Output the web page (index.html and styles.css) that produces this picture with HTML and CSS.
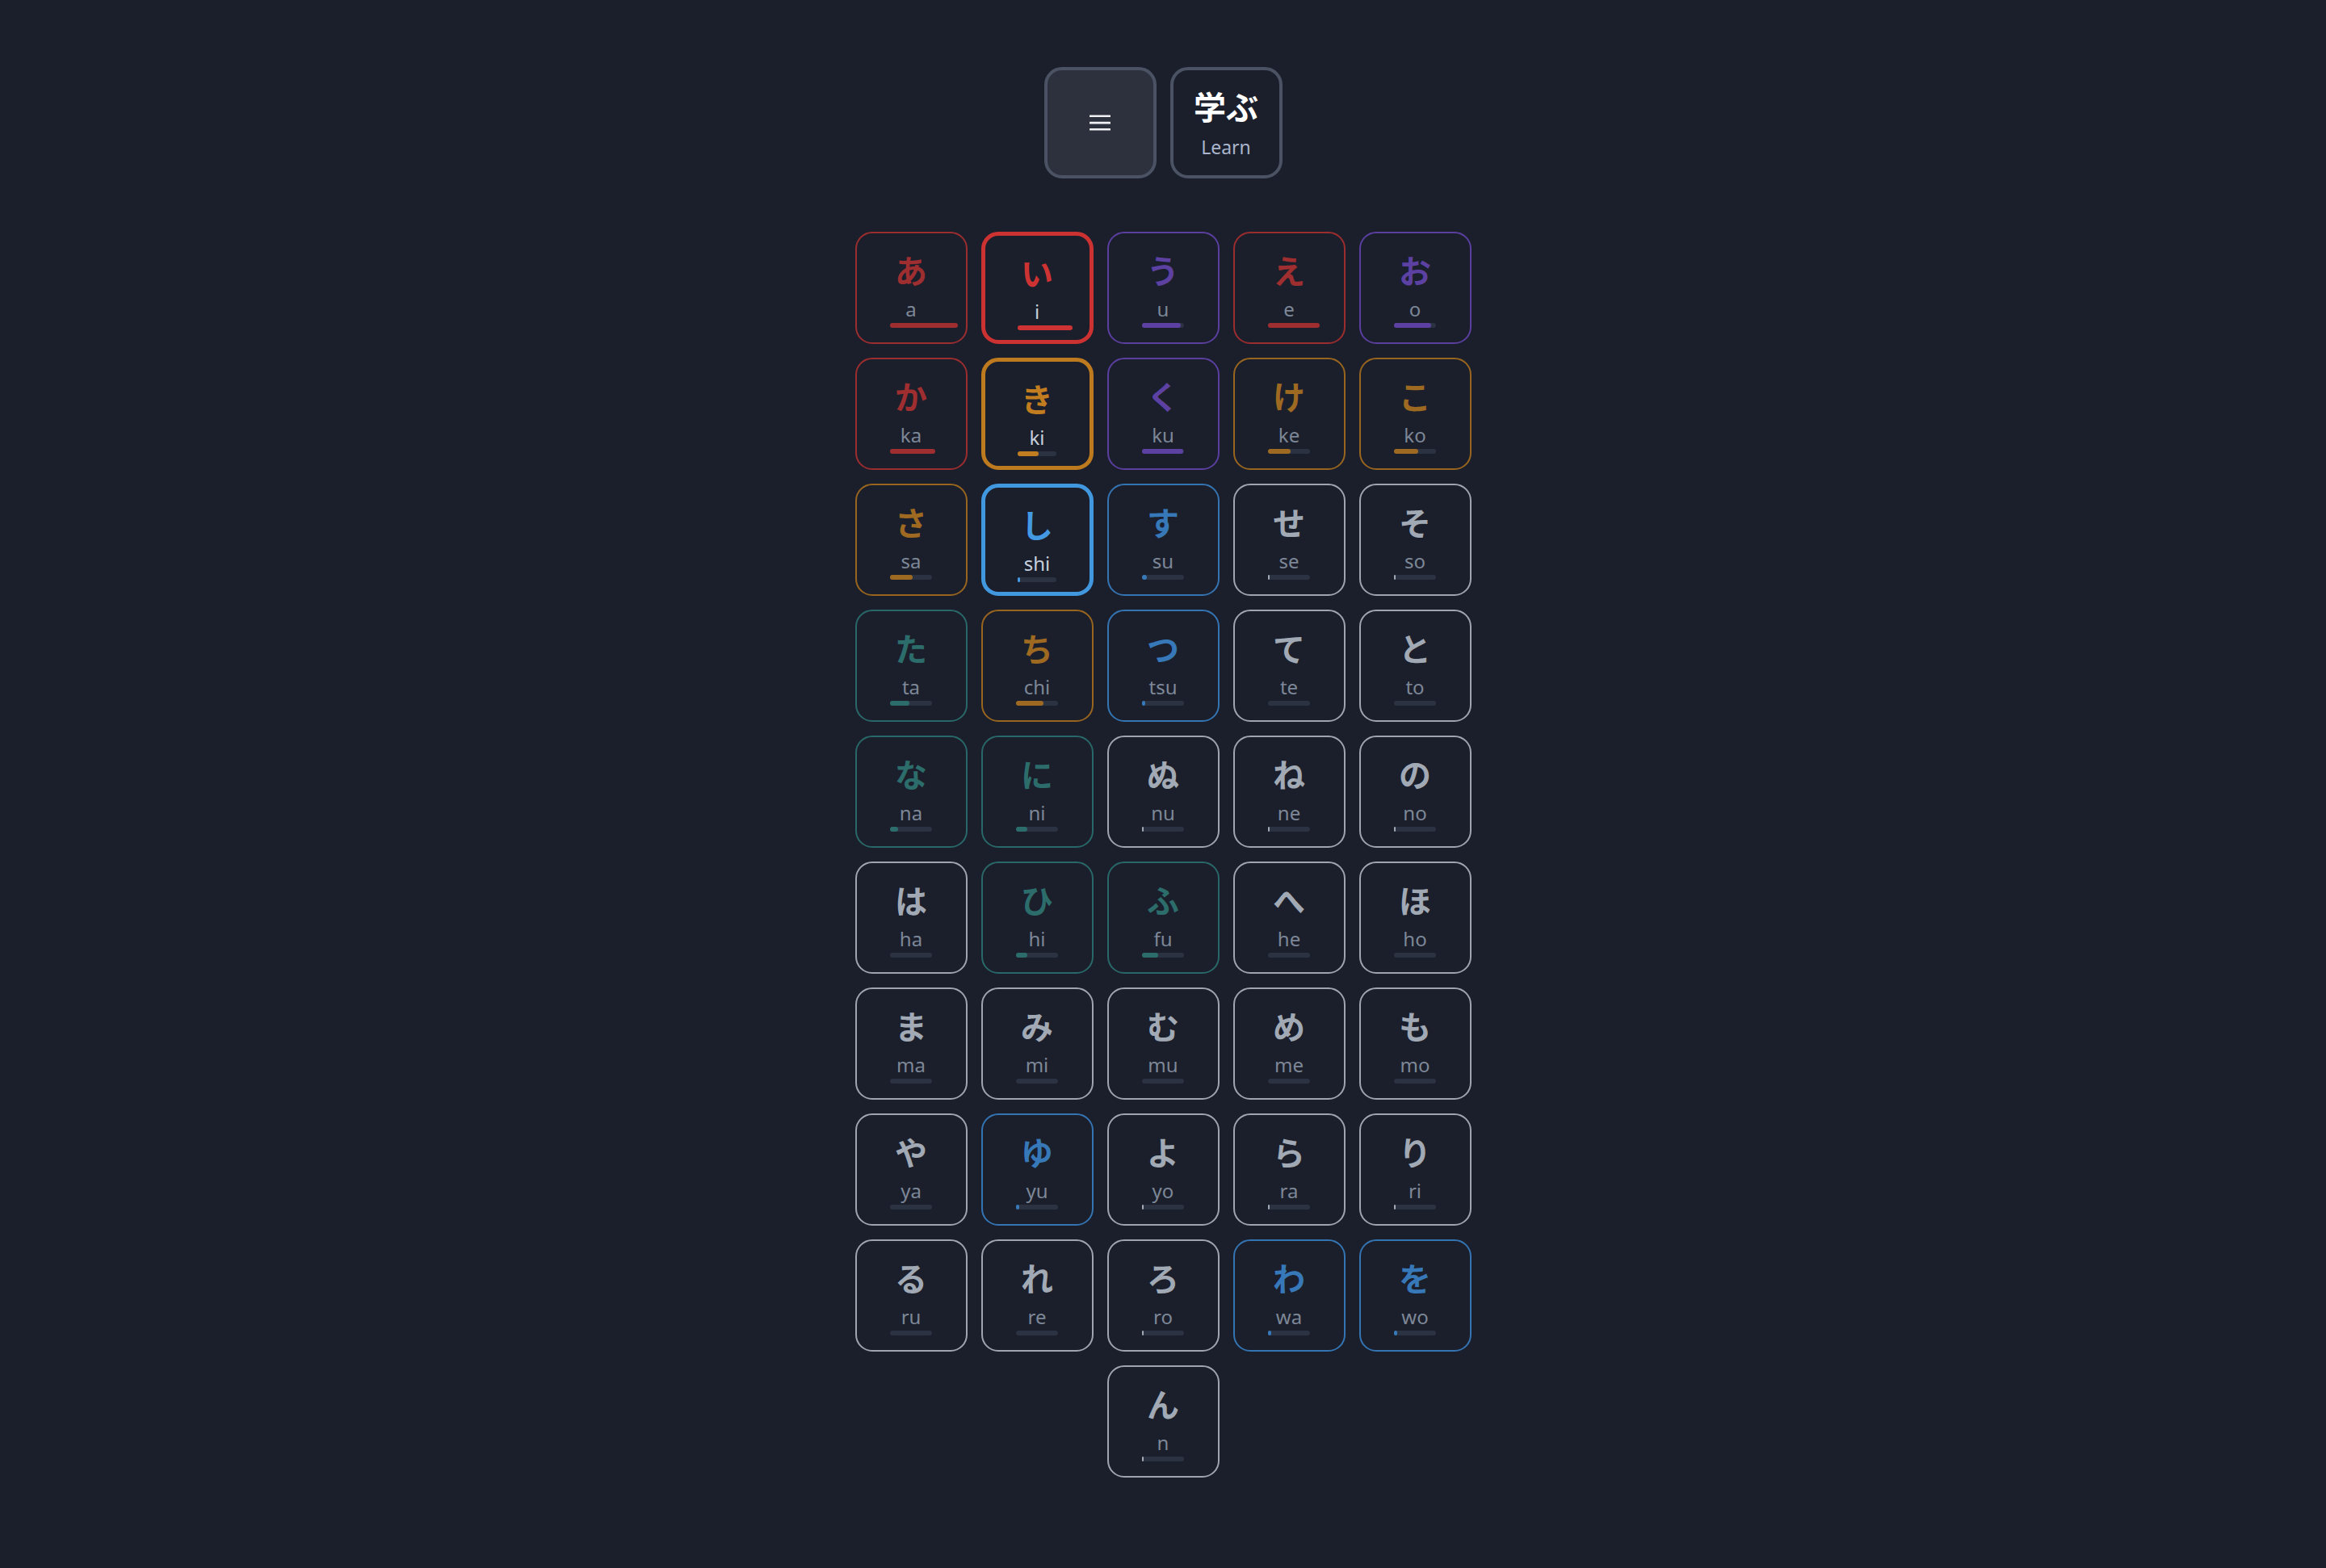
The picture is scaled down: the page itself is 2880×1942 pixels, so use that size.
FILE: index.html
```html
<!DOCTYPE html>
<html lang="ja">
<head>
<meta charset="utf-8">
<title>Hiragana</title>
<link rel="stylesheet" href="styles.css">
</head>
<body>
<header class="top">
  <button class="tbtn menu" aria-label="Menu">
    <svg width="26" height="22" viewBox="0 0 26 22"><rect x="0" y="1.5" width="26" height="2.6" rx="0.5"/><rect x="0" y="9.8" width="26" height="2.6" rx="0.5"/><rect x="0" y="18" width="26" height="2.6" rx="0.5"/></svg>
  </button>
  <button class="tbtn learn">
    <span class="learn-jp">学ぶ</span>
    <span class="learn-en">Learn</span>
  </button>
</header>
<main class="grid">
  <div class="cell red"><span class="kana">あ</span><span class="romaji">a</span><span class="bar"><span class="fill" style="width:162%"></span></span></div>
  <div class="cell red-sel sel"><span class="kana">い</span><span class="romaji">i</span><span class="bar"><span class="fill" style="width:141%"></span></span></div>
  <div class="cell purple"><span class="kana">う</span><span class="romaji">u</span><span class="bar"><span class="fill" style="width:92%"></span></span></div>
  <div class="cell red"><span class="kana">え</span><span class="romaji">e</span><span class="bar"><span class="fill" style="width:123%"></span></span></div>
  <div class="cell purple"><span class="kana">お</span><span class="romaji">o</span><span class="bar"><span class="fill" style="width:88%"></span></span></div>

  <div class="cell red"><span class="kana">か</span><span class="romaji">ka</span><span class="bar"><span class="fill" style="width:108%"></span></span></div>
  <div class="cell amber-sel sel"><span class="kana">き</span><span class="romaji">ki</span><span class="bar"><span class="fill" style="width:54%"></span></span></div>
  <div class="cell purple"><span class="kana">く</span><span class="romaji">ku</span><span class="bar"><span class="fill" style="width:98%"></span></span></div>
  <div class="cell amber"><span class="kana">け</span><span class="romaji">ke</span><span class="bar"><span class="fill" style="width:54%"></span></span></div>
  <div class="cell amber"><span class="kana">こ</span><span class="romaji">ko</span><span class="bar"><span class="fill" style="width:58%"></span></span></div>

  <div class="cell amber"><span class="kana">さ</span><span class="romaji">sa</span><span class="bar"><span class="fill" style="width:54%"></span></span></div>
  <div class="cell blue-sel sel"><span class="kana">し</span><span class="romaji">shi</span><span class="bar"><span class="fill" style="width:6%"></span></span></div>
  <div class="cell blue"><span class="kana">す</span><span class="romaji">su</span><span class="bar"><span class="fill" style="width:12%"></span></span></div>
  <div class="cell gray"><span class="kana">せ</span><span class="romaji">se</span><span class="bar"><span class="fill" style="width:4%"></span></span></div>
  <div class="cell gray"><span class="kana">そ</span><span class="romaji">so</span><span class="bar"><span class="fill" style="width:4%"></span></span></div>

  <div class="cell teal"><span class="kana">た</span><span class="romaji">ta</span><span class="bar"><span class="fill" style="width:46%"></span></span></div>
  <div class="cell amber"><span class="kana">ち</span><span class="romaji">chi</span><span class="bar"><span class="fill" style="width:66%"></span></span></div>
  <div class="cell blue"><span class="kana">つ</span><span class="romaji">tsu</span><span class="bar"><span class="fill" style="width:8%"></span></span></div>
  <div class="cell gray"><span class="kana">て</span><span class="romaji">te</span><span class="bar"><span class="fill" style="width:0%"></span></span></div>
  <div class="cell gray"><span class="kana">と</span><span class="romaji">to</span><span class="bar"><span class="fill" style="width:0%"></span></span></div>

  <div class="cell teal"><span class="kana">な</span><span class="romaji">na</span><span class="bar"><span class="fill" style="width:19%"></span></span></div>
  <div class="cell teal"><span class="kana">に</span><span class="romaji">ni</span><span class="bar"><span class="fill" style="width:27%"></span></span></div>
  <div class="cell gray"><span class="kana">ぬ</span><span class="romaji">nu</span><span class="bar"><span class="fill" style="width:4%"></span></span></div>
  <div class="cell gray"><span class="kana">ね</span><span class="romaji">ne</span><span class="bar"><span class="fill" style="width:4%"></span></span></div>
  <div class="cell gray"><span class="kana">の</span><span class="romaji">no</span><span class="bar"><span class="fill" style="width:4%"></span></span></div>

  <div class="cell gray"><span class="kana">は</span><span class="romaji">ha</span><span class="bar"><span class="fill" style="width:0%"></span></span></div>
  <div class="cell teal"><span class="kana">ひ</span><span class="romaji">hi</span><span class="bar"><span class="fill" style="width:27%"></span></span></div>
  <div class="cell teal"><span class="kana">ふ</span><span class="romaji">fu</span><span class="bar"><span class="fill" style="width:38%"></span></span></div>
  <div class="cell gray"><span class="kana">へ</span><span class="romaji">he</span><span class="bar"><span class="fill" style="width:0%"></span></span></div>
  <div class="cell gray"><span class="kana">ほ</span><span class="romaji">ho</span><span class="bar"><span class="fill" style="width:0%"></span></span></div>

  <div class="cell gray"><span class="kana">ま</span><span class="romaji">ma</span><span class="bar"><span class="fill" style="width:0%"></span></span></div>
  <div class="cell gray"><span class="kana">み</span><span class="romaji">mi</span><span class="bar"><span class="fill" style="width:0%"></span></span></div>
  <div class="cell gray"><span class="kana">む</span><span class="romaji">mu</span><span class="bar"><span class="fill" style="width:0%"></span></span></div>
  <div class="cell gray"><span class="kana">め</span><span class="romaji">me</span><span class="bar"><span class="fill" style="width:0%"></span></span></div>
  <div class="cell gray"><span class="kana">も</span><span class="romaji">mo</span><span class="bar"><span class="fill" style="width:0%"></span></span></div>

  <div class="cell gray"><span class="kana">や</span><span class="romaji">ya</span><span class="bar"><span class="fill" style="width:0%"></span></span></div>
  <div class="cell blue"><span class="kana">ゆ</span><span class="romaji">yu</span><span class="bar"><span class="fill" style="width:8%"></span></span></div>
  <div class="cell gray"><span class="kana">よ</span><span class="romaji">yo</span><span class="bar"><span class="fill" style="width:4%"></span></span></div>
  <div class="cell gray"><span class="kana">ら</span><span class="romaji">ra</span><span class="bar"><span class="fill" style="width:4%"></span></span></div>
  <div class="cell gray"><span class="kana">り</span><span class="romaji">ri</span><span class="bar"><span class="fill" style="width:4%"></span></span></div>

  <div class="cell gray"><span class="kana">る</span><span class="romaji">ru</span><span class="bar"><span class="fill" style="width:0%"></span></span></div>
  <div class="cell gray"><span class="kana">れ</span><span class="romaji">re</span><span class="bar"><span class="fill" style="width:0%"></span></span></div>
  <div class="cell gray"><span class="kana">ろ</span><span class="romaji">ro</span><span class="bar"><span class="fill" style="width:4%"></span></span></div>
  <div class="cell blue"><span class="kana">わ</span><span class="romaji">wa</span><span class="bar"><span class="fill" style="width:8%"></span></span></div>
  <div class="cell blue"><span class="kana">を</span><span class="romaji">wo</span><span class="bar"><span class="fill" style="width:8%"></span></span></div>

  <div class="cell gray col3"><span class="kana">ん</span><span class="romaji">n</span><span class="bar"><span class="fill" style="width:4%"></span></span></div>
</main>
</body>
</html>
```
FILE: styles.css
```css
html, body {
  margin: 0;
  padding: 0;
  background: #1b1f2b;
  min-height: 1942px;
}

body {
  font-family: "Noto Sans", "Noto Sans CJK JP", sans-serif;
  color: #e5e7eb;
}

.top {
  display: flex;
  justify-content: center;
  gap: 17px;
  padding-top: 83px;
}

.tbtn {
  box-sizing: border-box;
  width: 139px;
  height: 138px;
  border: 4px solid #4a5263;
  border-radius: 22px;
  background: #1b1f2b;
  padding: 0;
  margin: 0;
  display: flex;
  flex-direction: column;
  align-items: center;
  justify-content: center;
  font-family: inherit;
}

.menu {
  background: #2d313d;
}

.menu svg {
  fill: #eef0f4;
  display: block;
}

.learn {
  justify-content: flex-start;
  padding-top: 21px;
}

.learn-jp {
  font-family: "Noto Sans CJK JP", sans-serif;
  font-weight: 700;
  font-size: 40px;
  line-height: 46px;
  height: 46px;
  color: #ffffff;
}

.learn-en {
  font-family: "Noto Sans", sans-serif;
  font-size: 23px;
  line-height: 30px;
  color: #aab5cb;
  margin-top: 13px;
}

.grid {
  display: grid;
  grid-template-columns: repeat(5, 139px);
  grid-auto-rows: 139px;
  gap: 17px;
  justify-content: center;
  margin-top: 66px;
}

.cell {
  box-sizing: border-box;
  border: 2px solid #9ea5b0;
  border-radius: 21px;
  display: flex;
  flex-direction: column;
  align-items: center;
  padding-top: 21px;
  --c: #a1a9b4;
}

.col3 {
  grid-column: 3;
}

.kana {
  font-family: "Noto Sans CJK JP", sans-serif;
  font-weight: 700;
  font-size: 40px;
  line-height: 48px;
  height: 48px;
  color: var(--c);
}

.romaji {
  font-family: "Noto Sans", sans-serif;
  font-size: 24px;
  line-height: 28px;
  height: 28px;
  margin-top: 11px;
  color: #7d8797;
}

.sel .romaji {
  color: #c6cfdd;
}

.bar {
  position: relative;
  display: block;
  width: 52px;
  height: 6px;
  border-radius: 3px;
  background: #2b3242;
  margin-top: 3px;
}

.sel .bar {
  width: 48px;
}

.fill {
  position: absolute;
  left: 0;
  top: 0;
  height: 6px;
  border-radius: 3px;
  background: var(--c);
}

.sel {
  border-width: 5px;
  padding-top: 21px;
}

.gray { border-color: #9ea5b0; --c: #a1a9b4; }
.red { border-color: #9b2d2f; --c: #9e2e2f; }
.red-sel { border-color: #cc3232; --c: #cd3333; }
.purple { border-color: #5a3f9f; --c: #5c41a2; }
.amber { border-color: #98651f; --c: #9e6a22; }
.amber-sel { border-color: #bd7a1e; --c: #c27d20; }
.teal { border-color: #296868; --c: #2c6d6c; }
.blue { border-color: #3474b2; --c: #3779b8; }
.blue-sel { border-color: #4298df; --c: #449ae2; }
```
